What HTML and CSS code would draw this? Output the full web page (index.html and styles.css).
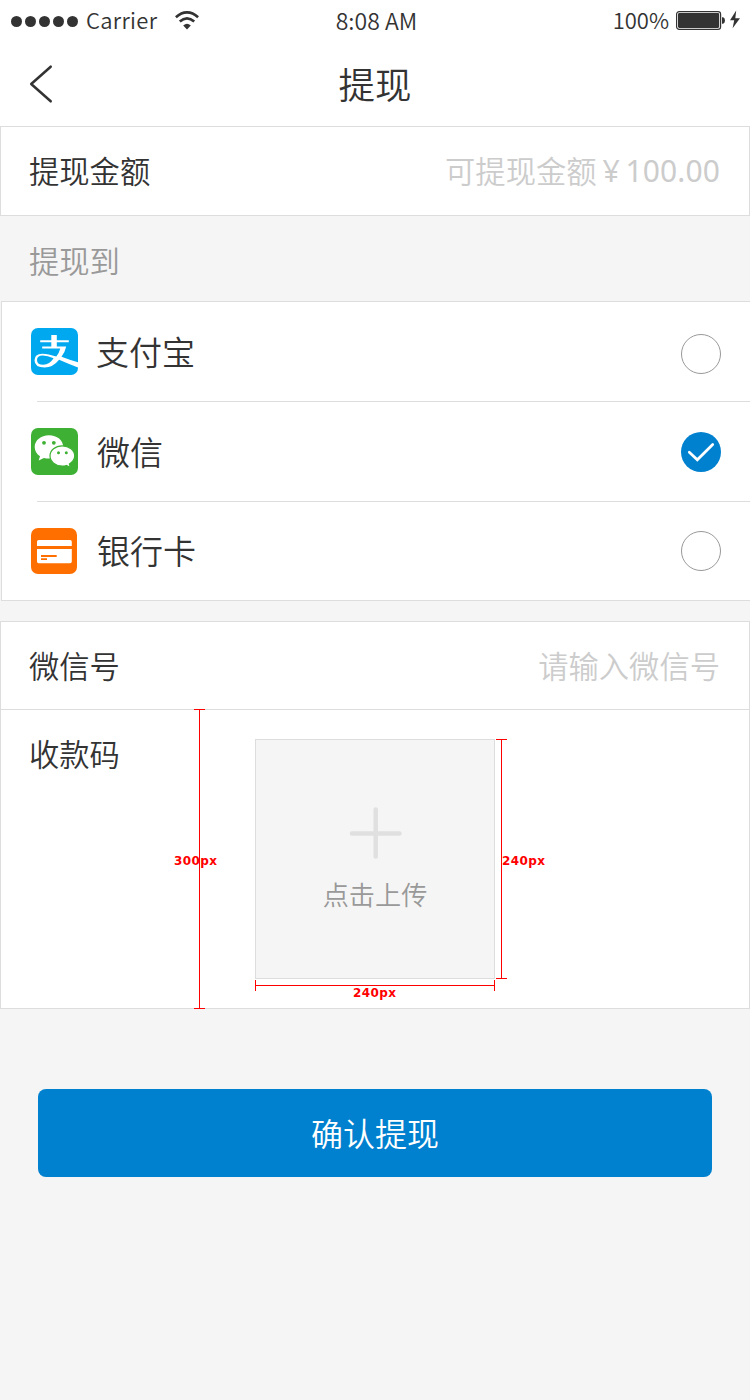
FILE: index.html
```html
<!DOCTYPE html>
<html lang="zh-CN">
<head>
<meta charset="utf-8">
<title>提现</title>
<link rel="stylesheet" href="styles.css">
</head>
<body>
<header class="header">
  <div class="status">
    <div class="status-left">
      <span class="signal"><i></i><i></i><i></i><i></i><i></i></span>
      <span class="carrier">Carrier</span>
      <svg class="wifi" width="24" height="19" viewBox="0 0 24 19" fill="none" stroke="#333" stroke-width="2.7">
        <path d="M.9 6.2Q12-3.4 23.1 6.2"/>
        <path d="M4.8 10.6Q12 4.200 19.2 10.6"/>
        <path d="M8.2 14.6Q12 10.7 15.8 14.6L12 18.4Z" fill="#333" stroke="none"/>
      </svg>
    </div>
    <span class="time">8:08 AM</span>
    <div class="status-right">
      <span class="percent">100%</span>
      <svg class="battery" width="66" height="22" viewBox="0 0 66 22">
        <rect x=".6" y="1.6" width="44" height="17.8" rx="2.6" fill="none" stroke="#333" stroke-width="1.2"/>
        <rect x="2" y="3" width="41.2" height="15" rx="1.4" fill="#333"/>
        <path d="M46 7.2h1.2q1.8 1 1.8 3.3t-1.8 3.3H46z" fill="#333"/>
        <path d="M60.2.4L54 10.3h4.2L56.600 18.200L64 8.300h-4.700z" fill="#333"/>
      </svg>
    </div>
  </div>
  <nav class="nav">
    <svg class="back" width="24" height="40" viewBox="0 0 24 40" fill="none" stroke="#333" stroke-width="2.5" stroke-linecap="round" stroke-linejoin="round"><path d="M21.700 2.700L2.200 20L21.700 37.300"/></svg>
    <h1 class="title">提现</h1>
  </nav>
</header>

<section class="field amount">
  <span class="label">提现金额</span>
  <span class="placeholder"><span>可提现金额</span><span class="yen">¥</span><span class="number">100.00</span></span>
</section>

<h2 class="caption">提现到</h2>

<section class="methods">
  <div class="method">
    <svg class="logo" width="47" height="47" viewBox="0 0 47 47">
      <rect width="47" height="47" rx="7" fill="#00a9ef"/>
      <path d="M20.300 7h5.500v5.200h12v2h-12v4.300h9.400q-1.300 5.900-4.700 10.300Q38.500 32 47 34.200v5.200Q37 35.800 28.100 31.800 22 39.500 13.600 39.500 3.500 39.500 3.500 32.300 3.500 25.700 11.300 25.700 17.300 25.700 25.300 28.600 28 25.400 29.300 20.500H11.200v-2h9.100v-4.300H9.200v-2h11.100zM22.600 30.300Q16.500 27.400 11.700 27.400 6 27.400 6 31.900 6 36.800 12.400 36.800 18.400 36.800 22.600 30.300z" fill="#fff"/>
    </svg>
    <span class="method-name">支付宝</span>
    <i class="radio"></i>
  </div>
  <div class="method">
    <svg class="logo" width="47" height="47" viewBox="0 0 47 47">
      <rect width="47" height="47" rx="7" fill="#3eb135"/>
      <path d="M18 7.200C9.900 7.200 3.700 12.300 3.700 19c0 3.900 2 7 5.300 9.200L7.700 32.600l5.200-2.700q2.400.6 5.100.6c8 0 14.200-4.700 14.200-11.500S26 7.200 18 7.200z" fill="#fff"/>
      <path d="M31.200 17.800c-6.800 0-12.200 4.300-12.200 10s5.400 10.300 12.200 10.300q2.200 0 4.200-.6l4 2-1-3.600c3.200-2 5.300-4.600 5.300-8.100 0-5.700-5.600-10-12.500-10z" fill="#fff" stroke="#3eb135" stroke-width="1.200"/>
      <g fill="#3eb135"><circle cx="13" cy="14.800" r="1.900"/><circle cx="22.800" cy="14.800" r="1.900"/><circle cx="27.500" cy="24.700" r="1.500"/><circle cx="35.300" cy="24.700" r="1.500"/></g>
    </svg>
    <span class="method-name">微信</span>
    <svg class="checked" width="40" height="40" viewBox="0 0 40 40"><circle cx="20" cy="20" r="20" fill="#0081cf"/><path d="M8.300 20.200L16.300 27.800L31.700 12.500" fill="none" stroke="#fff" stroke-width="2.700" stroke-linecap="round"/></svg>
  </div>
  <div class="method">
    <svg class="logo" width="47" height="47" viewBox="0 0 47 47">
      <rect width="46" height="46" rx="7" fill="#ff6f00"/>
      <path d="M6 18v-4.300q0-1.600 1.600-1.600h31.600q1.600 0 1.600 1.600V18zM6 21h34.800v12.600q0 1.600-1.600 1.600H7.600Q6 35.200 6 33.600z" fill="#fff"/>
      <path d="M10 28h15.700M10 31.200h6" stroke="#ff6f00" stroke-width="1.800"/>
    </svg>
    <span class="method-name">银行卡</span>
    <i class="radio"></i>
  </div>
</section>

<section class="account">
  <div class="field wechat">
    <span class="label">微信号</span>
    <span class="placeholder">请输入微信号</span>
  </div>
  <div class="qrcode">
    <span class="label">收款码</span>
    <div class="upload">
      <svg class="plus" width="54" height="54" viewBox="0 0 54 54" stroke="#e0e0e0" stroke-width="4.500" stroke-linecap="round"><path d="M27.700 3.500V50.500M4 27.500H51.500"/></svg>
      <span>点击上传</span>
    </div>
    <div class="measure measure-row"><b>300px</b></div>
    <div class="measure measure-height"><b>240px</b></div>
    <div class="measure measure-width"><b>240px</b></div>
  </div>
</section>

<button class="submit" type="button">确认提现</button>
</body>
</html>
```
FILE: styles.css
```css
* { box-sizing: border-box; }
body {
  margin: 0;
  width: 750px;
  height: 1400px;
  background: #f5f5f5;
  color: #333;
  font-family: "Noto Sans CJK SC", sans-serif;
  font-weight: 350;
  overflow: hidden;
}
svg { display: block; flex: none; }
.header { height: 126px; background: #fff; }
.status {
  display: grid;
  grid-template-columns: 1fr auto 1fr;
  align-items: center;
  height: 42px;
  padding: 0 8px 0 11px;
  font-size: 22px;
  line-height: 38px;
}
.status span { padding-bottom: 4px; }
.status .signal { padding-bottom: 0; }
.status-left, .status-right { display: flex; align-items: center; }
.status-right { justify-content: flex-end; }
.signal { display: flex; gap: 3px; }
.signal i { width: 11px; height: 11px; border-radius: 50%; background: #333; }
.carrier { margin-left: 8px; width: 72px; letter-spacing: .3px; }
.wifi { margin-left: 17px; margin-bottom: 2px; }
.status .time { padding-bottom: 2px; font-size: 23px; }
.percent { margin-right: 7px; }
.nav { position: relative; height: 84px; }
.back { position: absolute; left: 29px; top: 22px; }
.title { margin: 0; font-size: 36.5px; line-height: 84px; font-weight: inherit; text-align: center; }
.field { display: flex; justify-content: space-between; padding: 0 28px; font-size: 30.3px; }
.amount { height: 90px; line-height: 86px; border: 1px solid #ddd; background: #fff; }
.placeholder { display: flex; margin-right: 1px; color: #ccc; }
.yen { width: 29px; line-height: 88px; text-align: center; font-family: "Noto Sans", sans-serif; font-weight: 400; }
.number { line-height: 88px; font-family: "Noto Sans", sans-serif; font-size: 30px; font-weight: 400; letter-spacing: .1px; }
.caption { margin: 0; height: 85px; padding-left: 29px; line-height: 88px; font-size: 30.3px; font-weight: inherit; color: #999; }
.methods { height: 300px; margin-left: 1px; border: 1px solid #ddd; border-right: 0; background: #fff; }
.method {
  display: flex;
  align-items: center;
  height: 100px;
  margin-left: 35px;
  padding-right: 29px;
  border-bottom: 1px solid #ddd;
}
.method:last-child { height: 98px; border: 0; }
.logo { margin-left: -6px; }
.method-name { flex: 1; margin-left: 18px; padding-bottom: 1px; font-size: 33px; line-height: 96px; }
.method:not(:first-child) .method-name { margin-left: 19px; }
.method:last-child .method-name { padding-bottom: 2px; }
.radio { width: 40px; height: 40px; margin-top: 4px; border: 1px solid #999; border-radius: 50%; }
.method:last-child .radio { margin-top: 0; }
.account { margin-top: 20px; height: 388px; border: 1px solid #ddd; background: #fff; }
.wechat { height: 88px; line-height: 86px; border-bottom: 1px solid #ddd; }
.qrcode { position: relative; height: 298px; font-size: 30.3px; padding: 29px 0 0 28px; display: flex; align-items: flex-start; }
.qrcode .label { width: 226px; line-height: 29px; }
.upload {
  display: flex;
  flex-direction: column;
  align-items: center;
  width: 240px;
  height: 240px;
  padding-top: 66px;
  border: 1px solid #ddd;
  background: #f5f5f5;
  color: #999;
  font-size: 26.2px;
}
.upload span { margin-top: 14px; line-height: 41px; }
/* Dimension annotations laid over the form */
.measure { position: absolute; border: 0 solid #f00; }
.measure::before { content: ""; position: absolute; background: #f00; }
.measure b {
  position: absolute;
  color: #f00;
  font: bold 12px/12px "DejaVu Sans", sans-serif;
  letter-spacing: .4px;
}
.measure-row { left: 193px; top: -1px; width: 11px; height: 300px; border-width: 1px 0; }
.measure-height { left: 495px; top: 29px; width: 11px; height: 240px; border-width: 1px 0; }
.measure-row::before, .measure-height::before { left: 5px; top: 0; width: 1px; height: 100%; }
.measure-row b { left: -20px; top: 145px; }
.measure-height b { left: 6px; top: 115px; }
.measure-width { left: 254px; top: 270px; width: 240px; height: 11px; border-width: 0 1px; }
.measure-width::before { left: 0; top: 5px; width: 100%; height: 1px; }
.measure-width b { left: 97px; top: 7px; }
.submit {
  display: block;
  width: 674px;
  height: 88px;
  margin: 80px 38px 0;
  padding: 0 0 2px;
  border: 0;
  border-radius: 8px;
  background: #0081cf;
  color: #fff;
  font: inherit;
  font-size: 32px;
  line-height: 86px;
}
```
